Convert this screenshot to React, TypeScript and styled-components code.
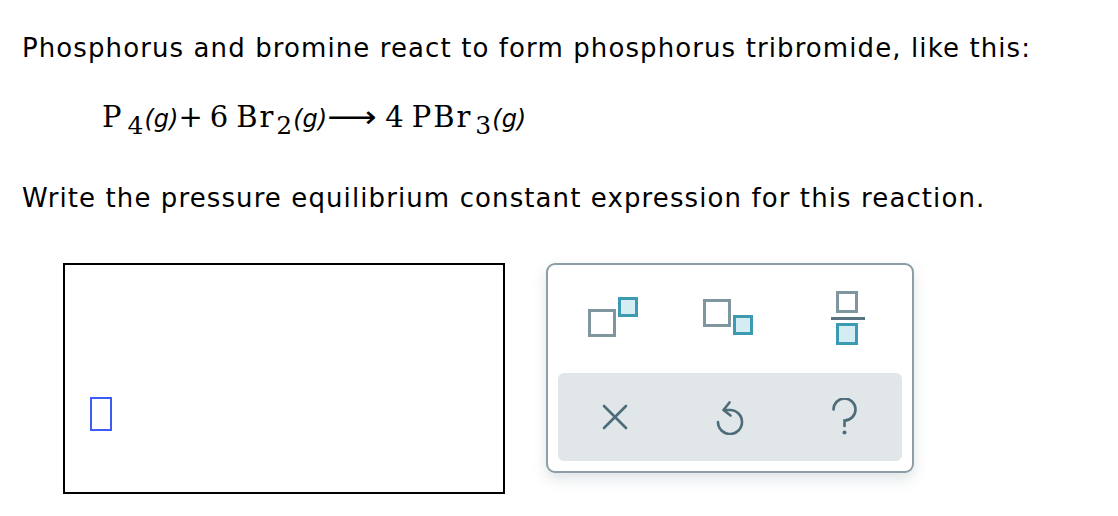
import React from "react";
import styled, { createGlobalStyle } from "styled-components";

const GlobalStyle = createGlobalStyle`
  html, body {
    margin: 0;
    padding: 0;
    background: #fff;
  }
  body {
    font-family: "DejaVu Sans", Verdana, sans-serif;
    color: #000;
  }
`;

const Page = styled.div`
  width: 1118px;
  height: 516px;
  padding: 30px 0 0 22px;
  box-sizing: border-box;
`;

const Para = styled.p`
  margin: 0;
  font-size: 26px;
  line-height: 36px;
  letter-spacing: 1.1px;
  white-space: nowrap;
`;

const Equation = styled.div`
  margin: 31px 0 0 80px;
  font-family: "DejaVu Serif", "Liberation Serif", serif;
  font-size: 29px;
  line-height: 40px;
  white-space: nowrap;
  display: flex;
  align-items: baseline;
`;

const Term = styled.span<{ $gap?: number }>`
  margin-left: ${(p) => p.$gap ?? 0}px;
  letter-spacing: 2px;
`;

const Sub = styled.span<{ $gap?: number }>`
  font-size: 25px;
  position: relative;
  top: 7px;
  margin-left: ${(p) => p.$gap ?? 3}px;
`;

const State = styled.span`
  font-family: "DejaVu Sans", Verdana, sans-serif;
  font-style: italic;
  font-size: 24px;
  margin-left: 1px;
`;

const Arrow = styled.span`
  font-family: "DejaVu Sans", sans-serif;
  font-size: 30px;
  display: inline-block;
  width: 56px;
  transform: scaleX(1.15);
  transform-origin: left center;
`;

const Question = styled(Para)`
  margin-top: 41px;
`;

const Answer = styled.div`
  display: flex;
  align-items: flex-start;
  gap: 41px;
  margin: 47px 0 0 41px;
`;

const InputBox = styled.div`
  width: 442px;
  height: 231px;
  box-sizing: border-box;
  border: 2px solid #000;
  display: flex;
  align-items: center;
  padding: 70px 0 0 25px;
`;

const Cursor = styled.div`
  width: 22px;
  height: 34px;
  box-sizing: border-box;
  border: 2px solid #3d5cf5;
`;

const Palette = styled.div`
  width: 368px;
  height: 210px;
  box-sizing: border-box;
  border: 2px solid #8c9ea7;
  border-radius: 9px;
  background: #fff;
  box-shadow: 0 6px 14px rgba(80, 100, 110, 0.18);
  padding: 0 10px 10px;
  display: flex;
  flex-direction: column;
`;

const ToolRow = styled.div`
  flex: 1;
  display: grid;
  grid-template-columns: repeat(3, 1fr);
  align-items: center;
  justify-items: center;
`;

const ActionRow = styled.div`
  height: 88px;
  border-radius: 6px;
  background: #e1e6e9;
  display: grid;
  grid-template-columns: repeat(3, 1fr);
  align-items: center;
  justify-items: center;
`;

const Tool = styled.button<{ $shift?: number }>`
  border: 0;
  background: none;
  padding: 0;
  cursor: pointer;
  display: flex;
  margin-left: ${(p) => p.$shift ?? 0}px;
`;

const Superscript = () => (
  <svg width="54" height="44" viewBox="0 0 54 44">
    <rect x="1.5" y="13.5" width="25" height="25" fill="#fff" stroke="#7f969f" strokeWidth="3" />
    <rect x="31.5" y="1.5" width="17" height="17" fill="#d4edf2" stroke="#3c9ab2" strokeWidth="3" />
  </svg>
);

const Subscript = () => (
  <svg width="54" height="40" viewBox="0 0 54 40">
    <rect x="1.5" y="1.5" width="25" height="25" fill="#fff" stroke="#7f969f" strokeWidth="3" />
    <rect x="31.5" y="17.5" width="17" height="17" fill="#d4edf2" stroke="#3c9ab2" strokeWidth="3" />
  </svg>
);

const Fraction = () => (
  <svg width="36" height="56" viewBox="0 0 36 56">
    <rect x="7.5" y="1.5" width="19" height="19" fill="#fff" stroke="#7f969f" strokeWidth="3" />
    <rect x="1" y="26" width="34" height="3" fill="#5a7380" />
    <rect x="7.5" y="33.5" width="19" height="19" fill="#d4edf2" stroke="#3c9ab2" strokeWidth="3" />
  </svg>
);

const ClearIcon = () => (
  <svg width="28" height="28" viewBox="0 0 28 28">
    <path d="M3 3 L25 25 M25 3 L3 25" stroke="#4d6b78" strokeWidth="2.6" strokeLinecap="round" />
  </svg>
);

const UndoIcon = () => (
  <svg width="30" height="36" viewBox="0 0 30 36">
    <path
      d="M3 23 A12 12 0 1 0 15 11 L9 11"
      fill="none"
      stroke="#4d6b78"
      strokeWidth="2.6"
      strokeLinecap="round"
    />
    <path
      d="M14.5 3.5 L8.5 11 L15.5 16.5"
      fill="none"
      stroke="#4d6b78"
      strokeWidth="2.6"
      strokeLinecap="round"
      strokeLinejoin="round"
    />
  </svg>
);

const HelpIcon = () => (
  <svg width="28" height="38" viewBox="0 0 28 38">
    <path
      d="M2.5 11.5 A11 11 0 1 1 13.5 22.5 V28"
      fill="none"
      stroke="#4d6b78"
      strokeWidth="2.6"
      strokeLinecap="round"
    />
    <circle cx="13.5" cy="34.5" r="2" fill="#4d6b78" />
  </svg>
);

export default function App() {
  return (
    <>
      <GlobalStyle />
      <Page>
        <Para>Phosphorus and bromine react to form phosphorus tribromide, like this:</Para>
        <Equation>
          <Term>P</Term>
          <Sub $gap={4}>4</Sub>
          <State>(g)</State>
          <Term>+</Term>
          <Term $gap={5}>6</Term>
          <Term $gap={6}>Br</Term>
          <Sub $gap={1}>2</Sub>
          <State>(g)</State>
          <Arrow>⟶</Arrow>
          <Term $gap={2}>4</Term>
          <Term $gap={6}>PBr</Term>
          <Sub $gap={3}>3</Sub>
          <State>(g)</State>
        </Equation>
        <Question>Write the pressure equilibrium constant expression for this reaction.</Question>
        <Answer>
          <InputBox>
            <Cursor />
          </InputBox>
          <Palette>
            <ToolRow>
              <Tool aria-label="superscript"><Superscript /></Tool>
              <Tool aria-label="subscript"><Subscript /></Tool>
              <Tool aria-label="fraction" $shift={6}><Fraction /></Tool>
            </ToolRow>
            <ActionRow>
              <Tool aria-label="clear"><ClearIcon /></Tool>
              <Tool aria-label="undo"><UndoIcon /></Tool>
              <Tool aria-label="help"><HelpIcon /></Tool>
            </ActionRow>
          </Palette>
        </Answer>
      </Page>
    </>
  );
}
